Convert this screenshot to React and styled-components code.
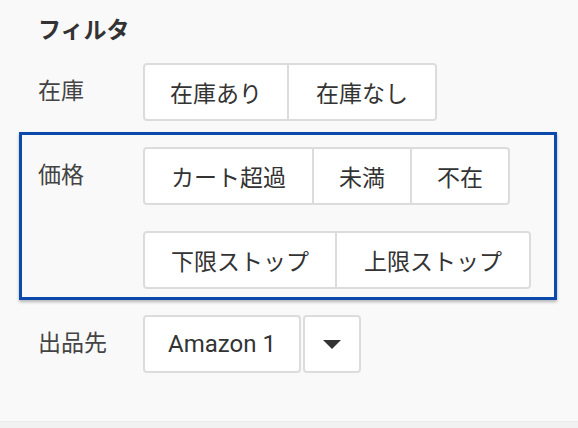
import React from 'react';
import styled, { createGlobalStyle } from 'styled-components';

const GlobalStyle = createGlobalStyle`
  html, body {
    margin: 0;
    padding: 0;
    background: #f1f1f1;
  }
  body {
    font-family: Roboto, "Noto Sans CJK JP", sans-serif;
    color: #333;
  }
`;

const Panel = styled.section`
  box-sizing: border-box;
  height: 422px;
  padding: 16px 21px 0 19px;
  background: #f9f9f9;
  border-bottom: 1px solid #ececec;
`;

const Title = styled.h2`
  margin: 0 0 14px 19px;
  font-size: 23px;
  line-height: 30px;
  font-weight: 700;
  color: #333;
`;

const Row = styled.div`
  display: grid;
  grid-template-columns: 105px 1fr;
  align-items: start;
  margin-top: ${props => props.$gap || 0}px;
  padding: ${props => (props.$highlight ? '12px 16px 8px' : '0 16px')};
  border: 3px solid ${props => (props.$highlight ? '#0b49ad' : 'transparent')};
  box-shadow: ${props => (props.$highlight ? '0 2px 3px rgba(0, 0, 0, 0.28)' : 'none')};
`;

const Label = styled.div`
  font-size: 23px;
  line-height: 58px;
  color: #444;
`;

const Lines = styled.div`
  display: flex;
  flex-direction: column;
  align-items: flex-start;
  gap: 26px;
`;

const Group = styled.div`
  display: flex;
`;

const SegButton = styled.button`
  box-sizing: border-box;
  height: 58px;
  padding: 0 ${props => props.$pad || 25}px;
  margin: 0;
  font-family: Roboto, "Noto Sans CJK JP", sans-serif;
  font-size: 23px;
  color: #333;
  background: #fff;
  border: 2px solid #dcdcdc;
  border-radius: 0;
  cursor: pointer;

  & + & {
    border-left: none;
  }
  &:first-child {
    border-radius: 4px 0 0 4px;
  }
  &:last-child {
    border-radius: 0 4px 4px 0;
  }
`;

const SelectBox = styled.div`
  display: flex;
  gap: 2px;
`;

const Button = styled.button`
  box-sizing: border-box;
  height: 58px;
  width: ${props => props.$width}px;
  padding: 0;
  margin: 0;
  display: flex;
  align-items: center;
  justify-content: center;
  font-family: Roboto, "Noto Sans CJK JP", sans-serif;
  font-size: 24px;
  color: #333;
  background: #fff;
  border: 2px solid #dcdcdc;
  border-radius: 4px;
`;

const Caret = () => (
  <svg width="18" height="9" viewBox="0 0 18 9">
    <path d="M0 0h18L9 9z" fill="#333" />
  </svg>
);

export default function App() {
  return (
    <>
      <GlobalStyle />
      <Panel>
        <Title>フィルタ</Title>

        <Row>
          <Label>在庫</Label>
          <Group>
            <SegButton $pad={25}>在庫あり</SegButton>
            <SegButton $pad={27}>在庫なし</SegButton>
          </Group>
        </Row>

        <Row $gap={8} $highlight>
          <Label>価格</Label>
          <Lines>
            <Group>
              <SegButton $pad={26}>カート超過</SegButton>
              <SegButton>未満</SegButton>
              <SegButton>不在</SegButton>
            </Group>
            <Group>
              <SegButton $pad={26}>下限ストップ</SegButton>
              <SegButton $pad={27}>上限ストップ</SegButton>
            </Group>
          </Lines>
        </Row>

        <Row $gap={12}>
          <Label>出品先</Label>
          <SelectBox>
            <Button $width={158}>Amazon 1</Button>
            <Button $width={58}>
              <Caret />
            </Button>
          </SelectBox>
        </Row>
      </Panel>
    </>
  );
}
